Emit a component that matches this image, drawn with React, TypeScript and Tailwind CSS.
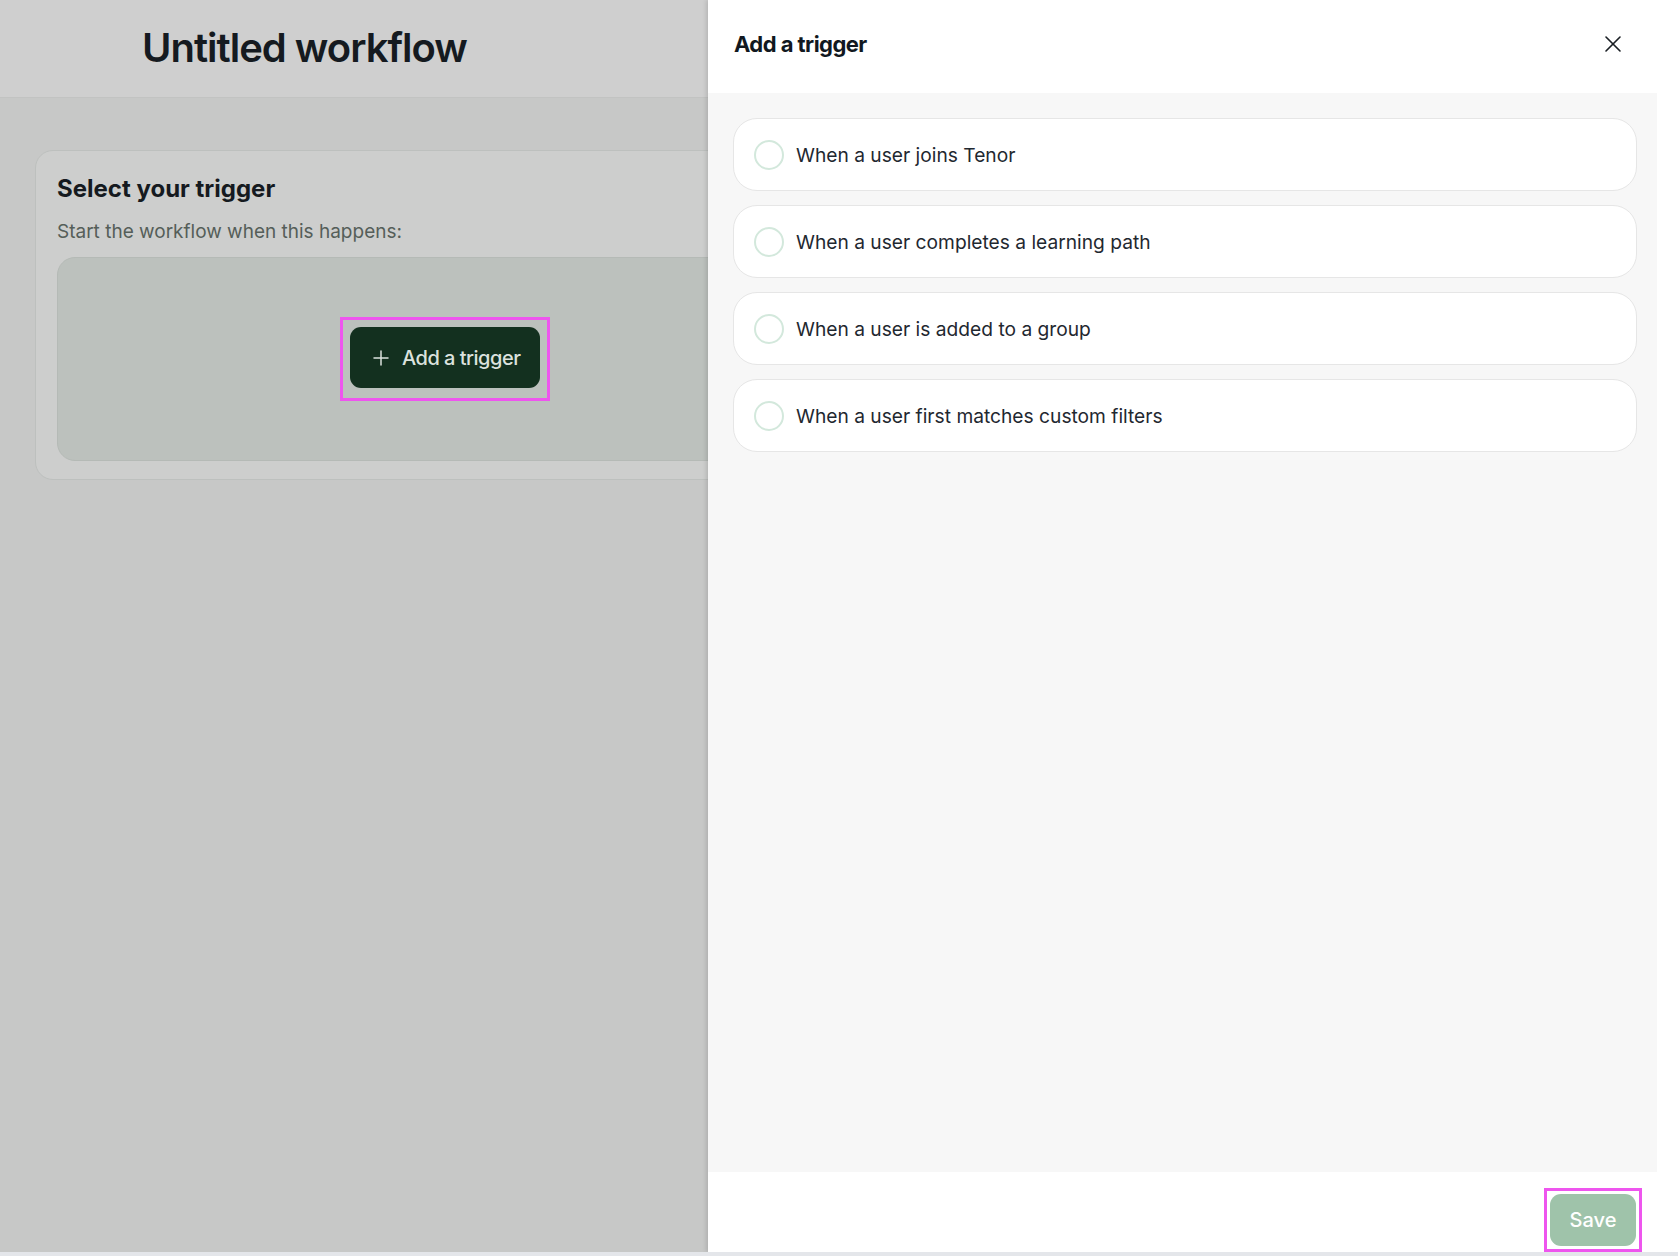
import { Plus, X } from 'lucide-react'

const triggers = [
  'When a user joins Tenor',
  'When a user completes a learning path',
  'When a user is added to a group',
  'When a user first matches custom filters',
]

function TriggerOption({ label }: { label: string }) {
  return (
    <div className="h-[73px] shrink-0 rounded-[24px] border border-[#e6e6e6] bg-white flex items-center pl-[20px] gap-[12px]">
      <span className="w-[30px] h-[30px] rounded-full border-2 border-[#d3e8dc] bg-white" />
      <span className="pt-[2px] text-[19.2px] text-[#1f2830]">{label}</span>
    </div>
  )
}

export default function App() {
  return (
    <div className="h-[1256px] w-full flex flex-col overflow-hidden bg-white font-['Inter','Noto_Sans',sans-serif]">
      <div className="flex flex-1 min-h-0">
        {/* Dimmed workflow page */}
        <div className="w-[708px] shrink-0 overflow-hidden bg-[#c7c8c7]">
          <header className="h-[98px] border-b border-[#c2c3c2] bg-[#cfcfcf] flex items-center pl-[142px] pb-[2px]">
            <h1 className="text-[40px] font-semibold tracking-tight text-[#151a20] whitespace-nowrap">Untitled workflow</h1>
          </header>
          <main className="pt-[52px] pl-[35px]">
            <section className="w-[820px] rounded-[18px] border border-[#bdc0be] bg-[#cdcecd] px-[21px] pt-[22px] pb-[18px]">
              <h2 className="text-[24px] leading-[32px] font-bold text-[#151a20]">Select your trigger</h2>
              <p className="mt-[13px] text-[19px] leading-[28px] text-[#555e59]">Start the workflow when this happens:</p>
              <div className="mt-[11px] h-[204px] rounded-[18px] border border-[#b5bab6] bg-[#bcc1bd] flex items-center justify-center">
                <div className="border-[3px] border-[#ee55ee] p-[7px] pb-[10px]">
                  <button className="w-[190px] h-[61px] rounded-[11px] bg-[#13301f] flex items-center pl-[19px] gap-[9px] text-[20px] font-medium tracking-tight text-[#dce2de]">
                    <Plus size={24} strokeWidth={1.5} />
                    Add a trigger
                  </button>
                </div>
              </div>
            </section>
          </main>
        </div>

        {/* Drawer */}
        <aside className="w-[949px] shrink-0 flex flex-col bg-white shadow-[-2px_0_4px_rgba(0,0,0,0.12)]">
          <div className="h-[93px] shrink-0 flex items-center justify-between pl-[26px] pr-[30px] pb-[5px]">
            <h2 className="text-[22px] font-bold tracking-tight text-[#111820]">Add a trigger</h2>
            <X size={28} strokeWidth={1.4} className="text-[#1a1f24]" />
          </div>
          <div className="flex-1 bg-[#f7f7f7] pt-[25px] pl-[25px] pr-[20px] flex flex-col gap-[14px]">
            {triggers.map((t) => (
              <TriggerOption key={t} label={t} />
            ))}
          </div>
          <div className="h-[80px] shrink-0 pt-[16px] pr-[15px] flex justify-end items-start">
            <div className="border-[3px] border-[#ee55ee] p-[3px]">
              <button className="w-[86px] h-[52px] rounded-[11px] bg-[#9fc3aa] text-[20px] font-medium text-white">
                Save
              </button>
            </div>
          </div>
        </aside>

        <div className="flex-1 bg-white" />
      </div>
      <div className="h-[4px] shrink-0 bg-[#e4e6ea]" />
    </div>
  )
}
